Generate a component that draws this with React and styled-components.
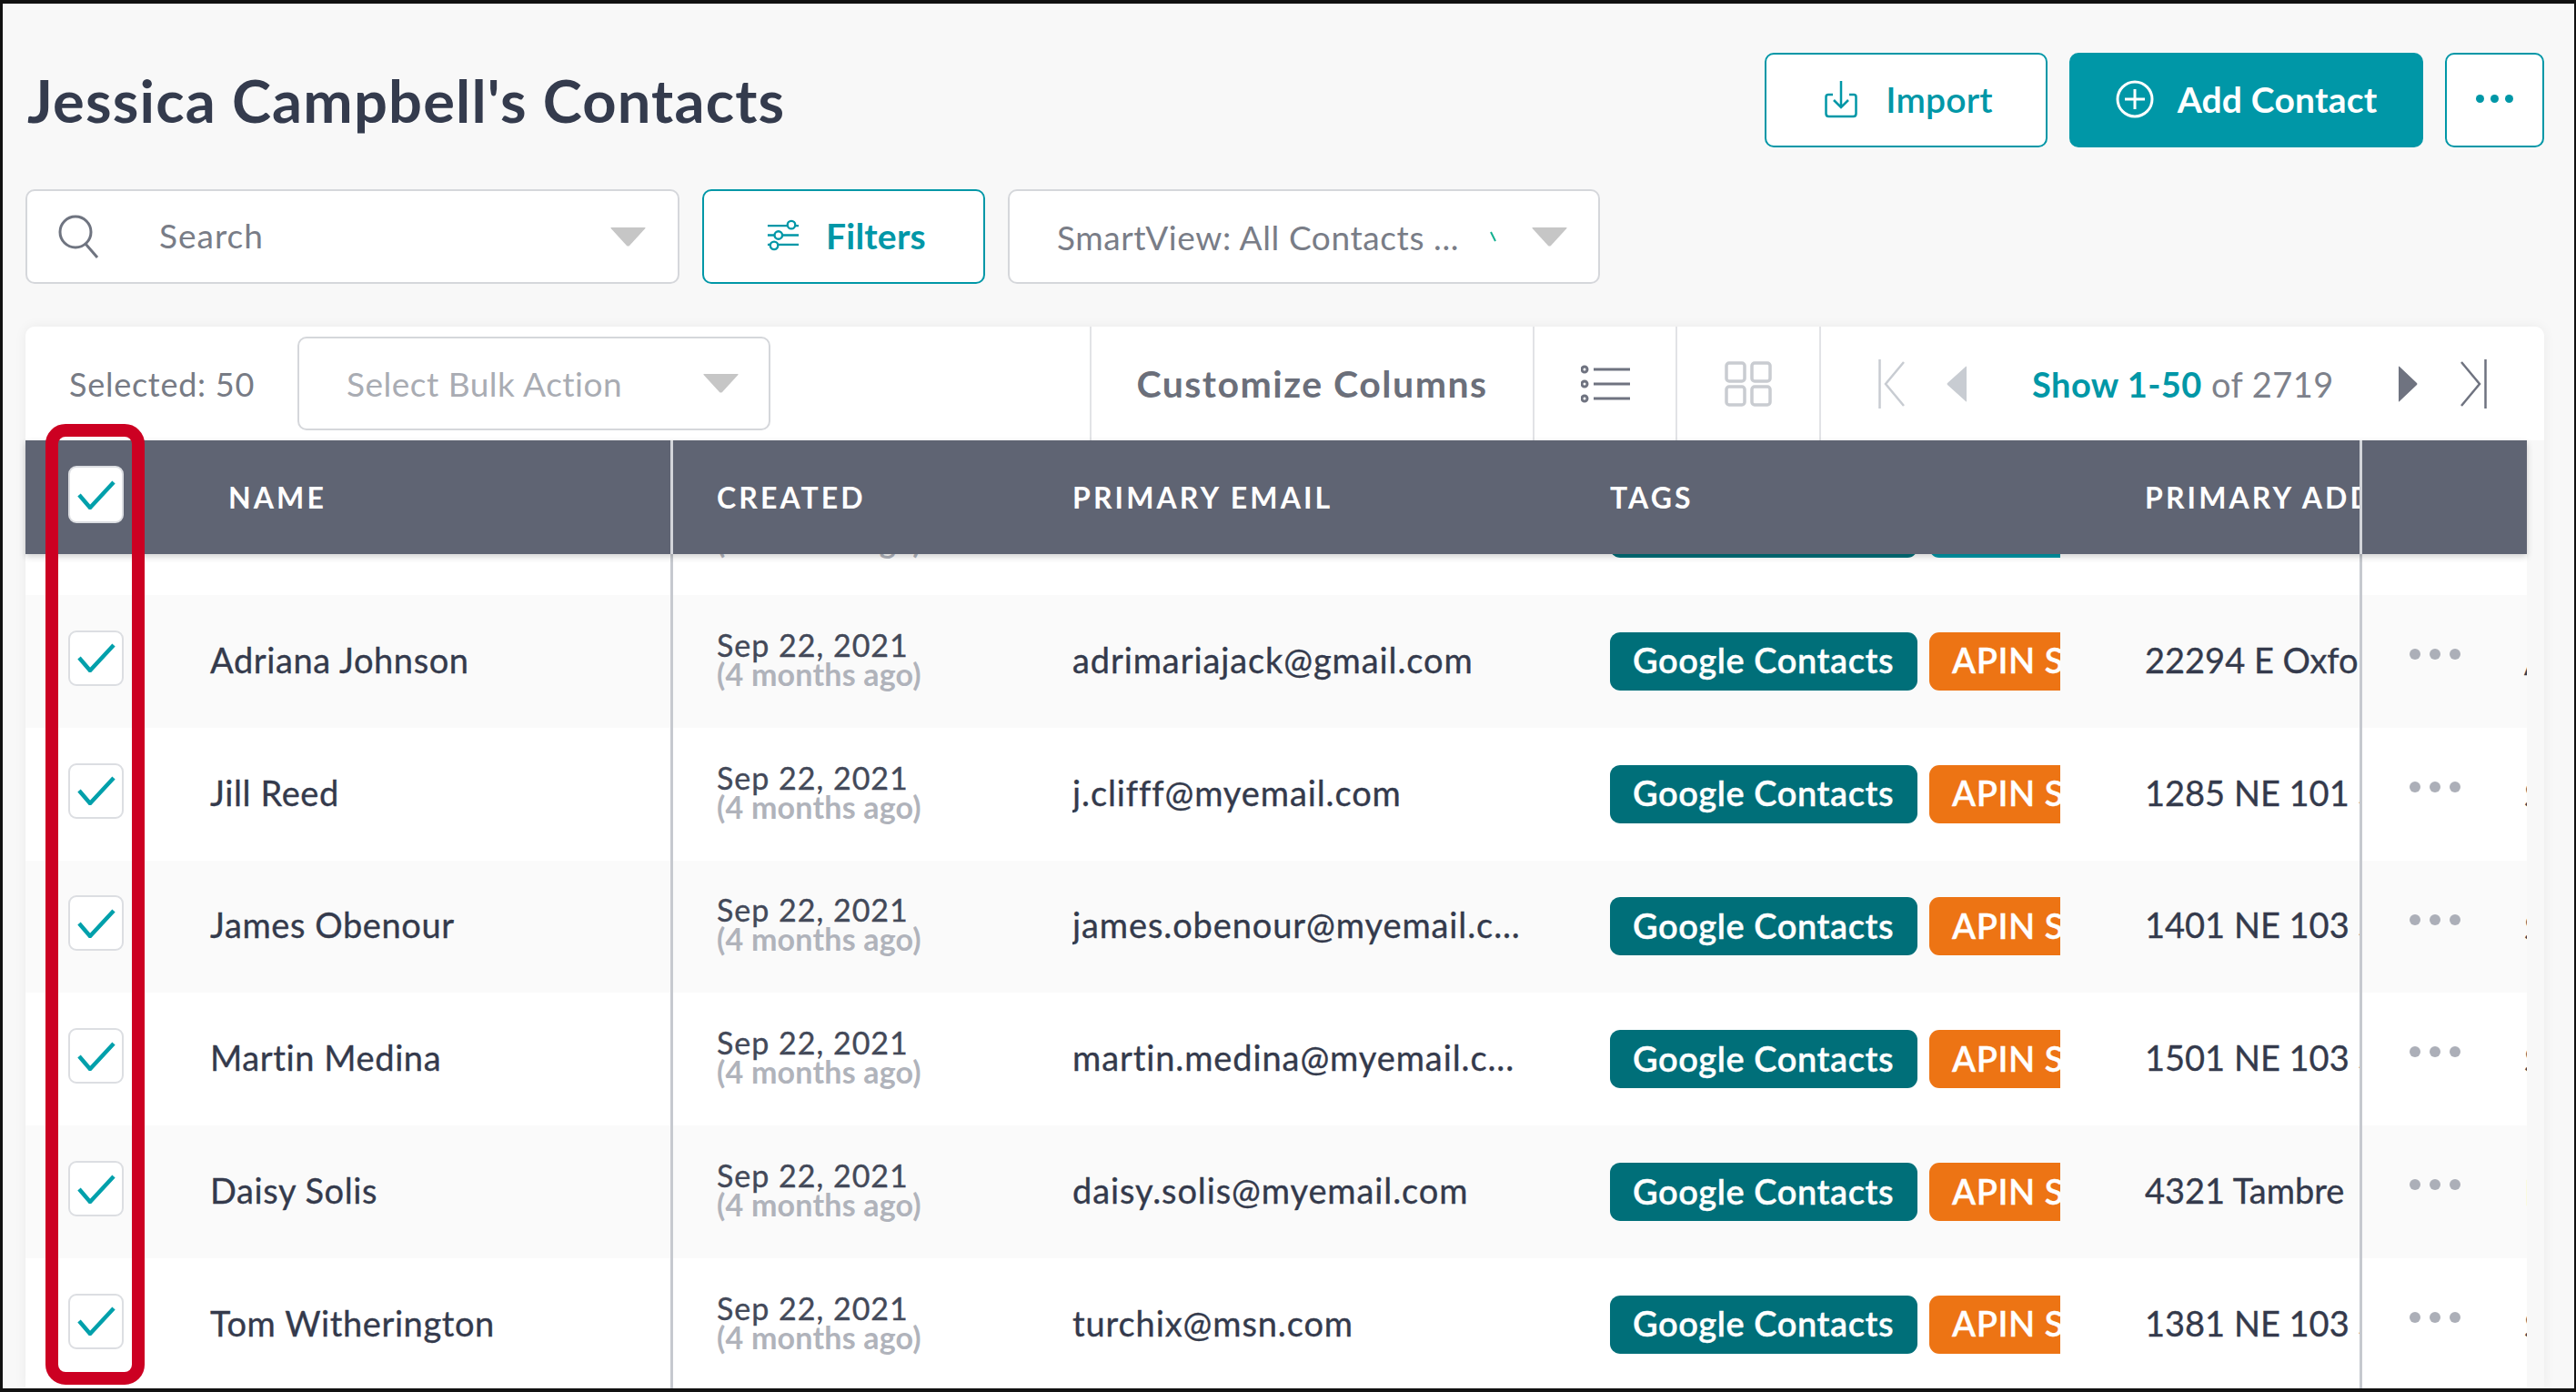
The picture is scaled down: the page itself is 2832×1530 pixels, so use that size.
import React from 'react';
import styled, { createGlobalStyle } from 'styled-components';

const TEAL = '#0097a7';
const FONT = '"Lato", "Open Sans", sans-serif';

const GlobalStyle = createGlobalStyle`
  * {
    box-sizing: border-box;
  }
  body {
    margin: 0;
    font-family: ${FONT};
    color: #343a4c;
  }
`;

const Page = styled.div`
  position: relative;
  display: flex;
  flex-direction: column;
  height: 100vh;
  overflow: hidden;
  padding: 54px 33px 0 25px;
  border: solid #111;
  border-width: 4px 2px 4px 3px;
  background-color: #f8f8f8;
`;

const TitleRow = styled.div`
  display: flex;
  align-items: center;
  justify-content: space-between;
  height: 104px;
`;

const Title = styled.h1`
  margin: 0 0 0 2px;
  font-size: 65px;
  font-weight: 700;
  letter-spacing: 1.2px;
  color: #343b4d;
`;

const Actions = styled.div`
  display: flex;
  gap: 24px;
`;

const Button = styled.div`
  display: flex;
  align-items: center;
  justify-content: center;
  gap: ${props => props.$gap || 0}px;
  width: ${props => props.$width}px;
  height: 104px;
  padding: 0 0 3px ${props => props.$nudge || 0}px;
  border: 2px solid ${TEAL};
  border-radius: 10px;
  background-color: ${props => (props.$solid ? TEAL : '#fff')};
  color: ${props => (props.$solid ? '#fff' : TEAL)};
  font-size: 39px;
  font-weight: ${props => (props.$solid || props.$bold ? 700 : 600)};
  letter-spacing: 0.2px;
`;

const DotRow = styled.div`
  display: flex;
  gap: ${props => props.$gap}px;
`;

const Dot = styled.span`
  width: ${props => props.$size}px;
  height: ${props => props.$size}px;
  border-radius: 50%;
  background-color: ${props => props.$color};
`;

const FilterRow = styled.div`
  display: flex;
  gap: 25px;
  margin-top: 46px;
`;

const Select = styled.div`
  display: flex;
  align-items: center;
  width: ${props => props.$width}px;
  height: ${props => props.$height || 104}px;
  padding: ${props => props.$padding};
  border: 2px solid #d5d7db;
  border-radius: 10px;
  background-color: #fff;
  font-size: 37px;
  letter-spacing: ${props => props.$spacing || 0.55}px;
  color: ${props => props.$color || '#797d87'};
  white-space: nowrap;
`;

const SearchLabel = styled.span`
  margin: 0 0 4px 65px;
  letter-spacing: 1px;
`;

const Tick = styled.svg`
  flex-shrink: 0;
  margin-left: 34px;
  width: 8px;
  height: 12px;
  stroke: #12b08f;
  stroke-width: 2;
`;

const Caret = styled.svg`
  flex-shrink: 0;
  width: 39px;
  height: 21px;
  margin-left: auto;
  fill: #c6c6c6;
`;

const Panel = styled.div`
  display: flex;
  flex: 1;
  flex-direction: column;
  min-height: 0;
  margin-top: 47px;
  border-radius: 10px 10px 0 0;
  box-shadow: 0 0 14px rgba(0, 0, 0, 0.06);
`;

const Toolbar = styled.div`
  display: flex;
  align-items: stretch;
  flex-shrink: 0;
  height: 125px;
  border-radius: 10px 10px 0 0;
  background-color: #fff;
`;

const BulkSection = styled.div`
  display: flex;
  align-items: center;
  width: 1170px;
  padding-left: 48px;
  font-size: 36px;
  color: #777b85;
`;

const Selected = styled.span`
  width: 251px;
  letter-spacing: 0.75px;
`;

const Section = styled.div`
  display: flex;
  align-items: center;
  justify-content: center;
  width: ${props => props.$width}px;
  border-left: 2px solid #e2e3e6;
  font-size: 41px;
  font-weight: 700;
  letter-spacing: 1.5px;
  color: #6b6f7a;
`;

const Pager = styled.div`
  display: flex;
  align-items: center;
  flex: 1;
  padding-left: 63px;
  border-left: 2px solid #e2e3e6;
`;

const PageIcon = styled.svg`
  flex-shrink: 0;
  margin-left: ${props => props.$left || 0}px;
  width: ${props => props.$width}px;
  height: ${props => props.$height}px;
`;

const PageText = styled.div`
  width: 331px;
  margin-left: 71px;
  font-size: 38px;
  letter-spacing: 0.45px;
  white-space: nowrap;
  color: #7d818b;
`;

const PageRange = styled.span`
  font-weight: 700;
  color: ${TEAL};
`;

const Table = styled.div`
  display: flex;
  flex: 1;
  flex-direction: column;
  min-height: 0;
  width: 2750px;
`;

const columns = '712px 439px 591px 588px 239px 181px';

const HeaderRow = styled.div`
  position: relative;
  z-index: 1;
  display: grid;
  grid-template-columns: ${columns};
  flex-shrink: 0;
  height: 125px;
  background-color: #5f6473;
  box-shadow: 0 3px 7px rgba(0, 0, 0, 0.18);
  font-size: 32px;
  font-weight: 700;
  letter-spacing: 3.1px;
  color: #fff;
`;

const HeaderCell = styled.div`
  display: flex;
  align-items: center;
  overflow: hidden;
  padding-left: ${props => props.$left || 0}px;
  white-space: nowrap;
  border-right: ${props => (props.$divider ? '3px solid #d3d5da' : 'none')};
`;

const HeaderName = styled.span`
  margin-left: 115px;
`;

const Body = styled.div`
  flex: 1;
  min-height: 0;
  overflow: hidden;
`;

const Row = styled.div`
  display: grid;
  grid-template-columns: ${columns};
  height: 145.8px;
  margin-top: ${props => (props.$clipped ? '-100.8px' : 0)};
  background-color: ${props => (props.$shaded ? '#fafafa' : '#fff')};
  font-size: 38px;
  color: #343a4c;
  -webkit-text-stroke: 0.35px currentColor;
`;

const Cell = styled.div`
  display: flex;
  align-items: center;
  overflow: hidden;
  padding-left: ${props => props.$left || 0}px;
  padding-bottom: ${props => props.$lift || 0}px;
  letter-spacing: ${props => props.$spacing || 0}px;
  white-space: nowrap;
  border-right: ${props => (props.$divider ? '3px solid #c6c9cf' : 'none')};
`;

const Box = styled.span`
  display: flex;
  align-items: center;
  justify-content: center;
  flex-shrink: 0;
  width: 61px;
  height: ${props => props.$height || 61}px;
  margin-bottom: ${props => props.$lift || 0}px;
  border: 2px solid #dcdee2;
  border-radius: 9px;
  background-color: #fff;
`;

const Check = styled.svg`
  width: 42px;
  height: 32px;
  fill: none;
  stroke: #00a0ab;
  stroke-width: 4.5;
`;

const Name = styled.span`
  margin: 0 0 4px 95px;
  letter-spacing: 0.6px;
`;

const DateBlock = styled.div`
  display: flex;
  flex-direction: column;
  font-size: 34px;
  line-height: 32px;
  letter-spacing: 1px;
  color: #434959;
`;

const Ago = styled.span`
  font-weight: 700;
  letter-spacing: 0.2px;
  color: #b0b3bb;
  -webkit-text-stroke: 0;
`;

const TagClip = styled.div`
  display: flex;
  gap: 13px;
  width: 495px;
  overflow: hidden;
`;

const Tag = styled.span`
  display: flex;
  align-items: center;
  flex-shrink: 0;
  width: ${props => props.$width}px;
  height: 64px;
  padding: 0 0 3px 25px;
  border-radius: 11px;
  background-color: ${props => props.$bg};
  font-size: 38px;
  font-weight: 600;
  letter-spacing: 0.55px;
  color: #fff;
`;

const MoreCell = styled.div`
  display: flex;
  overflow: hidden;
  padding: 59px 0 0 52px;
`;

const NextColumn = styled.span`
  margin-left: 70px;
  line-height: 28px;
`;

const Outline = styled.div`
  position: absolute;
  top: 462px;
  left: 47px;
  z-index: 2;
  width: 109px;
  height: 1056px;
  border: 14px solid #cc0022;
  border-radius: 22px;
`;

const CheckMark = () => (
  <Check viewBox="0 0 42 32">
    <path d="M2 16 L14 30 L40 2" />
  </Check>
);

const CaretIcon = () => (
  <Caret viewBox="0 0 39 21">
    <path d="M1 0 H38 Q39 0 38.4 1 L21 20 Q19.5 21 18 20 L0.6 1 Q0 0 1 0 Z" />
  </Caret>
);

const Dots = ({ size, gap, color }) => (
  <DotRow $gap={gap}>
    <Dot $size={size} $color={color} />
    <Dot $size={size} $color={color} />
    <Dot $size={size} $color={color} />
  </DotRow>
);

// first entry is the row scrolled almost entirely under the header
const contacts = [
  { underHeader: true },
  { name: 'Adriana Johnson', email: 'adrimariajack@gmail.com', address: '22294 E Oxford Ave', next: 'Aurora' },
  { name: 'Jill Reed', email: 'j.clifff@myemail.com', address: '1285 NE 101 St', next: 'Seattle' },
  { name: 'James Obenour', email: 'james.obenour@myemail.c...', address: '1401 NE 103 St', next: 'Seattle' },
  { name: 'Martin Medina', email: 'martin.medina@myemail.c...', address: '1501 NE 103 St', next: 'Seattle' },
  { name: 'Daisy Solis', email: 'daisy.solis@myemail.com', address: '4321 Tambre', next: 'Boulder' },
  { name: 'Tom Witherington', email: 'turchix@msn.com', address: '1381 NE 103 St', next: 'Seattle' }
];

const App = () => (
  <Page>
    <GlobalStyle />
    <TitleRow>
      <Title>Jessica Campbell's Contacts</Title>
      <Actions>
        <Button $width={311} $gap={31} $nudge={6}>
          <svg width="36" height="42" viewBox="0 0 36 42" fill="none" stroke={TEAL} strokeWidth="2.5">
            <path d="M9 16 H4 Q1.5 16 1.5 18.5 V37 Q1.5 40 4.5 40 H31.5 Q34.5 40 34.5 37 V18.5 Q34.5 16 32 16 H27" />
            <path d="M18 1 V29 M10 22 L18 30 L26 22" />
          </svg>
          Import
        </Button>
        <Button $width={389} $solid $gap={26}>
          <svg width="42" height="42" viewBox="0 0 42 42" fill="none" stroke="#fff" strokeWidth="3">
            <circle cx="21" cy="21" r="19" />
            <path d="M21 10 V32 M10 21 H32" />
          </svg>
          Add Contact
        </Button>
        <Button $width={109}>
          <Dots size={9} gap={7} color={TEAL} />
        </Button>
      </Actions>
    </TitleRow>

    <FilterRow>
      <Select $width={719} $padding="0 35px 0 32px">
        <svg width="48" height="48" viewBox="0 0 48 48" fill="none" stroke="#6f7480" strokeWidth="3">
          <circle cx="21" cy="19" r="17" />
          <path d="M32 32 L45 47" />
        </svg>
        <SearchLabel>Search</SearchLabel>
        <CaretIcon />
      </Select>
      <Button $width={311} $gap={29} $nudge={6} $bold>
        <svg width="36" height="35" viewBox="0 0 38 36" fill="none" stroke={TEAL} strokeWidth="2.5">
          <path d="M1 7 H24 M33 7 H37 M1 18 H9 M18 18 H37 M1 29 H4 M13 29 H37" />
          <circle cx="28.5" cy="6" r="4.5" />
          <circle cx="13.5" cy="18" r="4.5" />
          <circle cx="8.5" cy="30" r="4.5" />
        </svg>
        Filters
      </Button>
      <Select $width={651} $padding="0 34px 0 52px" $spacing={0.6}>
        SmartView: All Contacts ...
        <Tick viewBox="0 0 8 12">
          <path d="M1 1 L6 11" />
        </Tick>
        <CaretIcon />
      </Select>
    </FilterRow>

    <Panel>
      <Toolbar>
        <BulkSection>
          <Selected>Selected: 50</Selected>
          <Select $width={520} $height={103} $padding="0 33px 0 52px" $color="#a9acb3" $spacing={0.5}>
            Select Bulk Action
            <CaretIcon />
          </Select>
        </BulkSection>
        <Section $width={487}>Customize Columns</Section>
        <Section $width={157}>
          <svg width="54" height="42" viewBox="0 0 54 42" fill="none" stroke="#6f7380" strokeWidth="3">
            <circle cx="4" cy="5" r="3" />
            <circle cx="4" cy="21" r="3" />
            <circle cx="4" cy="37" r="3" />
            <path d="M14 5 H54 M14 21 H54 M14 37 H54" />
          </svg>
        </Section>
        <Section $width={158}>
          <svg width="52" height="50" viewBox="0 0 52 50" fill="none" stroke="#c9ccd1" strokeWidth="3.5">
            <rect x="2" y="2" width="20" height="20" rx="3" />
            <rect x="30" y="2" width="20" height="20" rx="3" />
            <rect x="2" y="28" width="20" height="20" rx="3" />
            <rect x="30" y="28" width="20" height="20" rx="3" />
          </svg>
        </Section>
        <Pager>
          <PageIcon $width={29} $height={54} viewBox="0 0 29 54" fill="none" stroke="#c8ccd2" strokeWidth="2.5">
            <path d="M1.5 0 V54 M28 3 L8 27 L28 51" />
          </PageIcon>
          <PageIcon $left={46} $width={23} $height={40} viewBox="0 0 23 40" fill="#c8ccd2">
            <path d="M22 1 V39 Q22 40 21 39 L1 21 Q0 20 1 19 L21 1 Q22 0 22 1 Z" />
          </PageIcon>
          <PageText>
            <PageRange>Show 1-50</PageRange> of 2719
          </PageText>
          <PageIcon $left={71} $width={22} $height={40} viewBox="0 0 22 40" fill="#6f7380">
            <path d="M1 1 V39 Q1 40 2 39 L21 21 Q22 20 21 19 L2 1 Q1 0 1 1 Z" />
          </PageIcon>
          <PageIcon $left={46} $width={30} $height={54} viewBox="0 0 30 54" fill="none" stroke="#6f7380" strokeWidth="2.5">
            <path d="M28.5 0 V54 M2 3 L22 27 L2 51" />
          </PageIcon>
        </Pager>
      </Toolbar>

      <Table>
        <HeaderRow>
          <HeaderCell $left={47} $divider>
            <Box $lift={6} $height={63}>
              <CheckMark />
            </Box>
            <HeaderName>NAME</HeaderName>
          </HeaderCell>
          <HeaderCell $left={48}>CREATED</HeaderCell>
          <HeaderCell>PRIMARY EMAIL</HeaderCell>
          <HeaderCell>TAGS</HeaderCell>
          <HeaderCell $divider>PRIMARY ADDRESS</HeaderCell>
          <HeaderCell />
        </HeaderRow>
        <Body>
          {contacts.map((contact, index) => (
            <Row key={index} $clipped={contact.underHeader} $shaded={index % 2 === 1}>
              <Cell $left={47} $divider>
                <Box $lift={7}>
                  <CheckMark />
                </Box>
                <Name>{contact.name}</Name>
              </Cell>
              <Cell $left={48} $lift={4}>
                <DateBlock>
                  Sep 22, 2021
                  <Ago>(4 months ago)</Ago>
                </DateBlock>
              </Cell>
              <Cell $lift={4} $spacing={0.9}>{contact.email}</Cell>
              <Cell>
                <TagClip>
                  <Tag $width={338} $bg="#006f79">{contact.underHeader ? '' : 'Google Contacts'}</Tag>
                  <Tag $width={240} $bg={contact.underHeader ? TEAL : '#ed7414'}>
                    {contact.underHeader ? '' : 'APIN Synced'}
                  </Tag>
                </TagClip>
              </Cell>
              <Cell $lift={4} $divider>{contact.address}</Cell>
              <MoreCell>
                <Dots size={12} gap={10} color="#acafb8" />
                <NextColumn>{contact.next}</NextColumn>
              </MoreCell>
            </Row>
          ))}
        </Body>
      </Table>
    </Panel>
    <Outline />
  </Page>
);

export default App;
